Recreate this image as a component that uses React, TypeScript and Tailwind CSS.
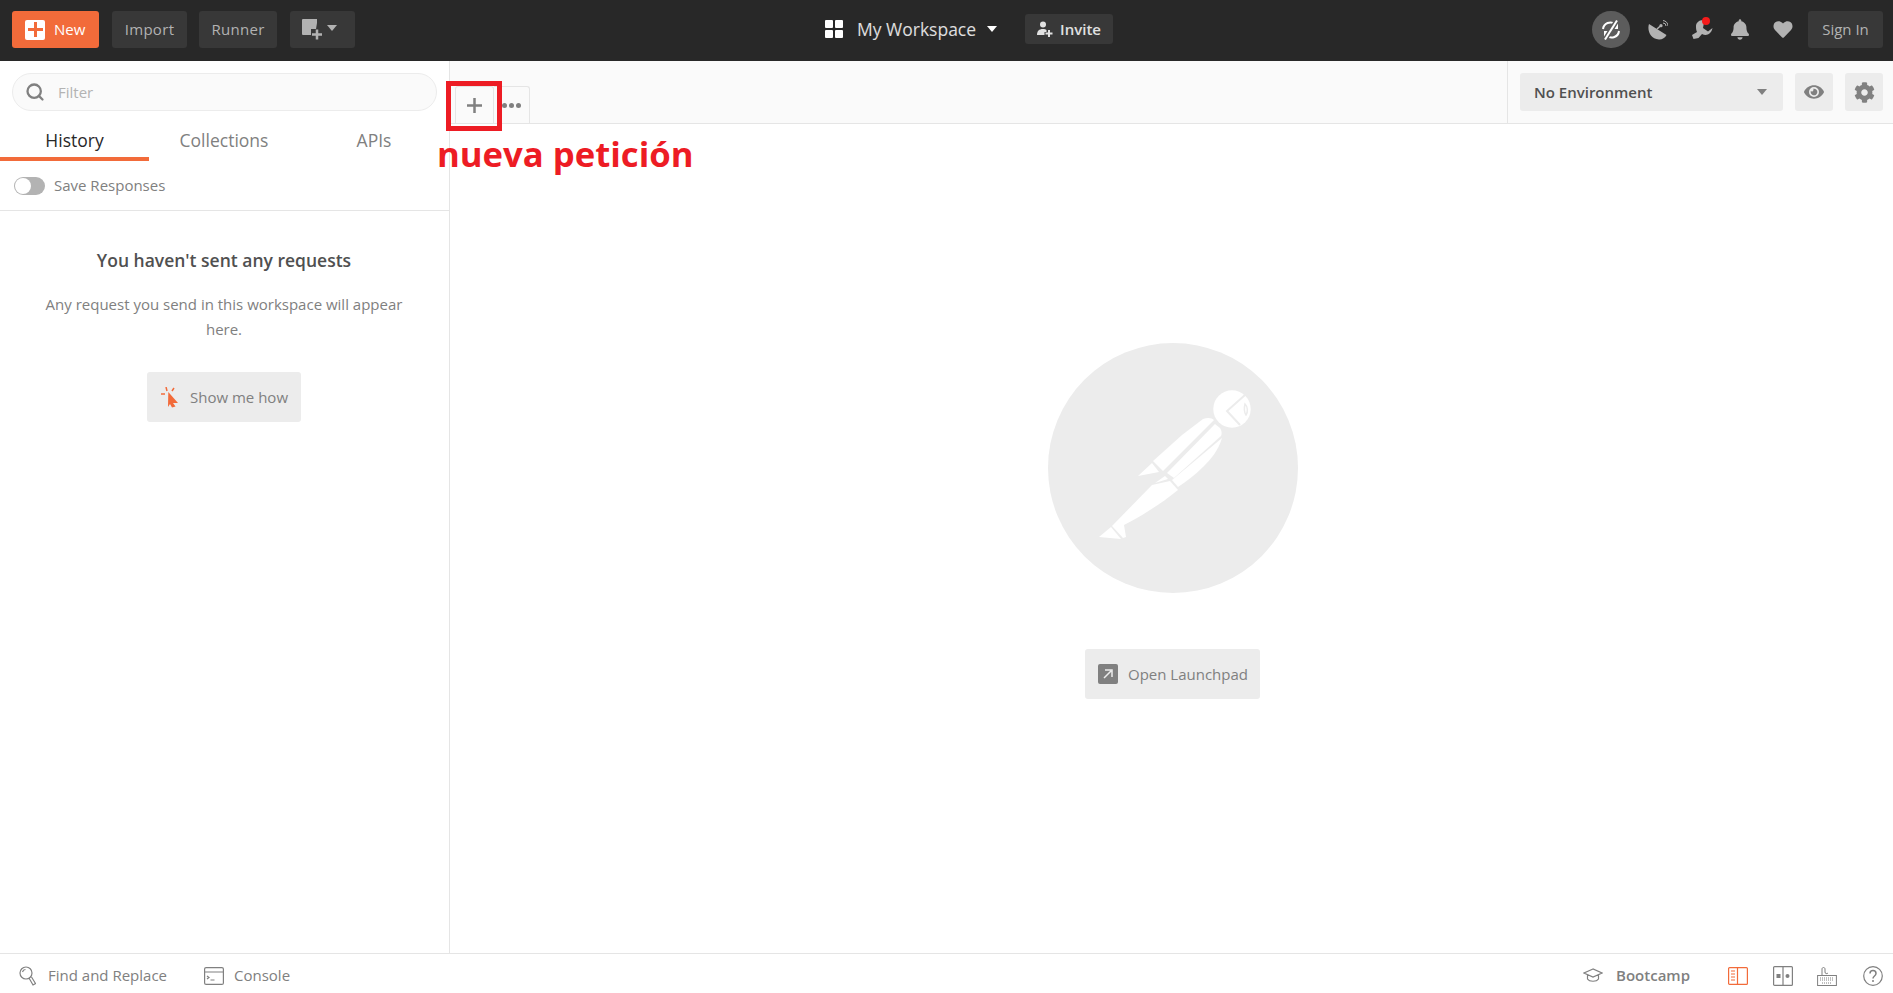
import React from 'react';
import { Search } from 'lucide-react';
import { FaBell, FaCog, FaEye, FaHeart } from 'react-icons/fa';

const Caret = ({ className }: { className: string }) => (
  <svg viewBox="0 0 10 6" className={className}>
    <path d="M0 0h10L5 6z" fill="currentColor" />
  </svg>
);

const PlusMark = ({ className, width }: { className: string; width: number }) => (
  <svg viewBox="0 0 15 15" className={className}>
    <path d="M0 7.500h15M7.500 0v15" stroke="currentColor" strokeWidth={width} />
  </svg>
);

const PostmanLogo = () => (
  <svg viewBox="0 0 250 250" className="w-[250px] h-[250px]">
    <circle cx="125" cy="125" r="125" fill="#ececec" />
    <circle cx="184" cy="66" r="18.700" fill="#fff" />
    <path d="M197 52l-18 16 13 14" fill="none" stroke="#ececec" strokeWidth="2" />
    <path d="M197 61c3 3 3 8 1 11-2-3-2-7-1-11z" fill="none" stroke="#ececec" strokeWidth="1.500" />
    <g fill="#fff">
      <path d="M105 118L134 92 155 76C160 74 164 75 166 77L115 128z" />
      <path d="M90 133L104 120 111 129z" />
      <path d="M167 81L172 85C174 88 174 91 173 93L126 135 119 130z" />
      <path d="M107 140L117 133 120 136z" />
      <path d="M174 95C170 108 163 116 155 124 147 132 139 138 130 144L124 137z" />
      <path d="M104 142L122 138 130 147C121 154 112 161 102 167 93 173 85 177 76 182L78 194 75 195 64 183z" />
      <path d="M51 194L63 184 73 196z" />
    </g>
  </svg>
);

const TopButton = ({ className, children }: { className: string; children: React.ReactNode }) => (
  <button className={`h-[37px] rounded-[3px] bg-[#383838] text-[#b2b2b2] text-[15px] font-medium tracking-[0.3px] flex items-center justify-center ${className}`}>
    {children}
  </button>
);

export default function App() {
  return (
    <div className="relative w-[1893px] h-[993px] overflow-hidden flex flex-col bg-white font-['Open_Sans',sans-serif]">
      {/* header */}
      <div className="h-[61px] shrink-0 bg-[#282828] flex items-center justify-between pb-[2px] pl-[12px] pr-[10px] relative">
        <div className="flex items-center gap-[12px]">
          <button className="mr-[1px] h-[37px] w-[87px] rounded-[3px] bg-[#f26b3a] text-white text-[15px] font-medium flex items-center pl-[13px] gap-[9px]">
            <span className="w-[20px] h-[20px] rounded-[2px] bg-white flex items-center justify-center">
              <PlusMark className="w-[15px] h-[15px] text-[#f26b3a]" width={3} />
            </span>
            New
          </button>
          <TopButton className="w-[75px]">Import</TopButton>
          <TopButton className="w-[78px] mr-[1px]">Runner</TopButton>
          <button className="h-[37px] w-[65px] rounded-[3px] bg-[#383838] flex items-center pl-[12px] gap-[5px]">
            <svg viewBox="0 0 20 21" className="w-[20px] h-[21px] text-[#b2b2b2]">
              <path d="M0 1a1 1 0 0 1 1-1h14v4l-1 6H9v6H1a1 1 0 0 1-1-1z" fill="currentColor" />
              <path d="M10 15.500h10M15 10.500v10" stroke="currentColor" strokeWidth="2.500" />
            </svg>
            <Caret className="w-[10px] h-[6px] text-[#b2b2b2] mb-[3px]" />
          </button>
        </div>

        <div className="absolute left-[825px] top-[14px] flex items-center">
          <svg viewBox="0 0 18 18" className="w-[18px] h-[18px] text-white">
            <rect x="0" y="0" width="8" height="8" rx="1" fill="currentColor" />
            <rect x="10" y="0" width="8" height="8" rx="1" fill="currentColor" />
            <rect x="0" y="10" width="8" height="8" rx="1" fill="currentColor" />
            <rect x="10" y="10" width="8" height="8" rx="1" fill="currentColor" />
          </svg>
          <span className="ml-[14px] text-[17.500px] text-white/85 leading-[30px]">My Workspace</span>
          <Caret className="ml-[11px] w-[10px] h-[6px] text-white" />
          <button className="ml-[28px] h-[30px] w-[88px] rounded-[3px] bg-[#383838] flex items-center pl-[12px] gap-[7px] text-[15px] font-semibold text-white/85">
            <svg viewBox="0 0 16 16" className="w-[16px] h-[16px]">
              <circle cx="6" cy="3.500" r="3" fill="currentColor" />
              <path d="M0 14c0-4 2-6 6-6 1.500 0 2.600.3 3.500 1v2H7.500v3z" fill="currentColor" />
              <path d="M8.500 12.500h7M12 9v7" stroke="currentColor" strokeWidth="2" />
            </svg>
            Invite
          </button>
        </div>

        <div className="flex items-center">
          <span className="w-[38px] h-[37px] rounded-full bg-[#5c5c5c] flex items-center justify-center">
            <svg viewBox="0 0 20 20" className="w-[20px] h-[20px] text-white" fill="none" stroke="currentColor" strokeWidth="2">
              <path d="M2 9a7.500 7.500 0 0 1 12-5l2-1v5h-5M18 11a7.500 7.500 0 0 1-12 5l-2 1v-5h5" />
              <path d="M4 19.500L16 .5" stroke="#5c5c5c" strokeWidth="5" />
              <path d="M4 19.500L16 .5" strokeWidth="2" />
            </svg>
          </span>
          <svg viewBox="0 0 20 20" className="ml-[18px] w-[20px] h-[20px] text-[#b2b2b2]">
            <path d="M1 4C-1 10 2 19 11 19.500 14 19.700 17 18 18.500 15z" fill="currentColor" />
            <path d="M9 9l4-3.500" stroke="currentColor" strokeWidth="1.500" />
            <circle cx="13" cy="5.700" r="1.600" fill="currentColor" />
            <path d="M15 3a3 3 0 0 1 3 3M15 .5a5.500 5.500 0 0 1 5 5.500" stroke="currentColor" fill="none" />
          </svg>
          <span className="relative ml-[24px] w-[20px] h-[21px]">
            <svg viewBox="0 0 21 21" className="w-[21px] h-[21px] text-[#b2b2b2]">
              <path d="M11 1C7 1 4 4 4 7c0 2 0 4 1 6L0 16l1.500 4 5-1 3.500-4c4 2 9 1 10.500-6l-4.500 3.500L11 9l1-5.500z" fill="currentColor" />
            </svg>
            <span className="absolute top-[-2px] right-[2px] w-[8px] h-[8px] rounded-full bg-[#f51b1b]" />
          </span>
          <FaBell className="ml-[19px] w-[18px] h-[21px] text-[#b2b2b2]" />
          <FaHeart className="ml-[24px] w-[20px] h-[19px] text-[#b2b2b2]" />
          <button className="ml-[15px] h-[37px] w-[75px] rounded-[3px] bg-[#383838] text-[#b2b2b2] text-[15px]">Sign In</button>
        </div>
      </div>

      <div className="flex-1 flex min-h-0">
        {/* sidebar */}
        <div className="w-[450px] shrink-0 border-r border-[#e5e5e5] flex flex-col">
          <div className="pt-[12px] pl-[12px]">
            <div className="h-[38px] w-[425px] rounded-full bg-[#fafafa] border border-[#ececec] flex items-center pl-[12px]">
              <Search className="w-[20px] h-[20px] text-[#808080]" strokeWidth={2.750} />
              <span className="ml-[13px] text-[15px] text-[#b3b3b3]">Filter</span>
            </div>
          </div>
          <div className="flex h-[50px] text-[17.500px]">
            <div className="w-[149px] pt-[12px] border-b-[4px] border-[#f26b3a] flex items-center justify-center text-[#282828]">History</div>
            <div className="w-[150px] pt-[12px] border-b-[4px] border-transparent flex items-center justify-center text-[#808080]">Collections</div>
            <div className="w-[150px] pt-[12px] border-b-[4px] border-transparent flex items-center justify-center text-[#808080]">APIs</div>
          </div>
          <div className="h-[50px] border-b border-[#e5e5e5] flex items-center pl-[14px]">
            <span className="w-[31px] h-[18px] rounded-full bg-[#b3b3b3] relative">
              <span className="absolute left-[1px] top-[1px] w-[16px] h-[16px] rounded-full bg-white" />
            </span>
            <span className="ml-[9px] text-[15px] text-[#808080]">Save Responses</span>
          </div>
          <div className="flex flex-col items-center pl-[40px] pr-[41px] pt-[37px]">
            <div className="text-[17.500px] leading-[24px] font-semibold text-[#505050] whitespace-nowrap">You haven't sent any requests</div>
            <div className="mt-[20px] text-[15px] leading-[25px] text-[#808080] text-center">
              Any request you send in this workspace will appear here.
            </div>
            <button className="mt-[30px] h-[50px] w-[154px] rounded-[3px] bg-[#ececec] flex items-center pl-[14px] gap-[11px] text-[15px] text-[#808080]">
              <svg viewBox="0 0 18 21" className="w-[18px] h-[21px] text-[#f26b3a]">
                <path d="M7.300 5L17 16h-5l2.500 3.500L11 20.500 9 17l-2 3z" fill="currentColor" />
                <path d="M0 7h4M5 0l1 4M13 1l-2 3" stroke="currentColor" strokeWidth="1.500" />
              </svg>
              Show me how
            </button>
          </div>
        </div>

        {/* main */}
        <div className="flex-1 min-w-0 flex flex-col">
          <div className="h-[63px] shrink-0 bg-[#fafafa] border-b border-[#e5e5e5] flex">
            <div className="flex-1 flex items-end pl-[5px]">
              <div className="w-[39px] h-[37px] border border-b-0 border-[#e5e5e5] rounded-t-[3px] flex items-center justify-center">
                <PlusMark className="w-[15px] h-[15px] text-[#808080]" width={2.500} />
              </div>
              <div className="w-[36px] h-[37px] border border-l-0 border-b-0 border-[#e5e5e5] rounded-tr-[3px] flex items-center justify-center gap-[2px]">
                <span className="w-[5px] h-[5px] rounded-full bg-[#808080]" />
                <span className="w-[5px] h-[5px] rounded-full bg-[#808080]" />
                <span className="w-[5px] h-[5px] rounded-full bg-[#808080]" />
              </div>
            </div>
            <div className="w-[386px] border-l border-[#e5e5e5] flex items-start pt-[12px] pl-[12px] gap-[12px]">
              <div className="w-[263px] h-[38px] rounded-[3px] bg-[#ececec] flex items-center justify-between pl-[14px] pr-[16px] text-[15px] font-semibold text-[#505050]">
                No Environment
                <Caret className="w-[10px] h-[6px] text-[#808080]" />
              </div>
              <span className="w-[38px] h-[38px] rounded-[3px] bg-[#ececec] flex items-center justify-center">
                <FaEye className="w-[20px] h-[20px] text-[#808080]" />
              </span>
              <span className="w-[38px] h-[38px] rounded-[3px] bg-[#ececec] flex items-center justify-center">
                <FaCog className="w-[21px] h-[21px] text-[#808080]" />
              </span>
            </div>
          </div>
          <div className="flex-1 flex flex-col items-center pt-[219px] pl-[2px]">
            <PostmanLogo />
            <button className="mt-[56px] h-[50px] w-[175px] rounded-[3px] bg-[#ececec] flex items-center pl-[13px] gap-[10px] text-[15px] text-[#808080]">
              <span className="w-[20px] h-[20px] rounded-[2px] bg-[#808080] flex items-center justify-center">
                <svg viewBox="0 0 12 12" className="w-[12px] h-[12px]" fill="none" stroke="#ececec" strokeWidth="1.500">
                  <path d="M2 10L9 3M3 2h7v7" />
                </svg>
              </span>
              Open Launchpad
            </button>
          </div>
        </div>
      </div>

      {/* footer */}
      <div className="h-[40px] shrink-0 border-t border-[#e5e5e5] flex items-center justify-between text-[15px] text-[#808080] pt-[4px] pl-[19px] pr-[10px]">
        <div className="flex items-center">
          <svg viewBox="0 0 17 20" className="w-[17px] h-[20px]" fill="none" stroke="currentColor" strokeWidth="1.200">
            <circle cx="7" cy="7" r="6" />
            <path d="M3.500 6a3.500 3.500 0 0 1 3-2.500M10 12l4 7 2.500-1.500-4-6.500" />
          </svg>
          <span className="ml-[12px]">Find and Replace</span>
          <svg viewBox="0 0 20 18" className="ml-[37px] w-[20px] h-[18px]" fill="none" stroke="currentColor" strokeWidth="1.200">
            <rect x=".6" y=".6" width="18.800" height="16.800" rx="1.500" />
            <path d="M.6 5h18.800M3 9l2 1.500L3 12M6.500 13h4" />
          </svg>
          <span className="ml-[10px]">Console</span>
        </div>
        <div className="flex items-center">
          <svg viewBox="0 0 20 15" className="w-[20px] h-[15px]" fill="none" stroke="currentColor" strokeWidth="1.200">
            <path d="M10 1L1 5l9 4 9-4zM4.500 7v4c2 3 9 3 11 0V7" />
          </svg>
          <span className="ml-[13px] font-semibold">Bootcamp</span>
          <svg viewBox="0 0 20 18" className="ml-[38px] w-[20px] h-[18px] text-[#f26b3a]" fill="none" stroke="currentColor" strokeWidth="1.200">
            <rect x=".6" y=".6" width="18.800" height="16.800" rx="1" />
            <path d="M9.500 .6v16.800M3 4h4M3 7h4M3 10h4M3 13h4" />
          </svg>
          <svg viewBox="0 0 20 20" className="ml-[25px] w-[20px] h-[20px]" fill="none" stroke="currentColor" strokeWidth="1.200">
            <rect x=".6" y=".6" width="18.800" height="18.800" rx="1" />
            <path d="M10 .6v18.800" />
            <rect x="3.500" y="8" width="4" height="4" fill="currentColor" stroke="none" />
            <circle cx="14.500" cy="10" r="2" fill="currentColor" stroke="none" />
          </svg>
          <svg viewBox="0 0 20 20" className="ml-[24px] w-[20px] h-[20px]" fill="none" stroke="currentColor" strokeWidth="1">
            <rect x=".6" y="9.500" width="18.800" height="10" />
            <path d="M5 9.500V3c0-2 3-2 3 0v3c0 2 2 2 3 1" />
            <path d="M3 12h14M3 14h14M5 17h10" strokeDasharray="1 1" />
          </svg>
          <svg viewBox="0 0 20 20" className="ml-[26px] w-[20px] h-[20px]" fill="none" stroke="currentColor" strokeWidth="1.200">
            <circle cx="10" cy="10" r="9.300" />
            <path d="M7 7.500c0-4 6-4 6 0 0 2.500-3 2.500-3 5" strokeWidth="1.500" />
            <circle cx="10" cy="15" r="1" fill="currentColor" stroke="none" />
          </svg>
        </div>
      </div>

      {/* annotation drawn over the screenshot */}
      <div className="absolute left-[446px] top-[81px] w-[56px] h-[50px] border-[5px] border-[#ed1c24]" />
      <div className="absolute left-[437px] top-[129px] text-[34.700px] leading-[50px] font-bold text-[#ed1c24] whitespace-nowrap">nueva petición</div>
    </div>
  );
}
